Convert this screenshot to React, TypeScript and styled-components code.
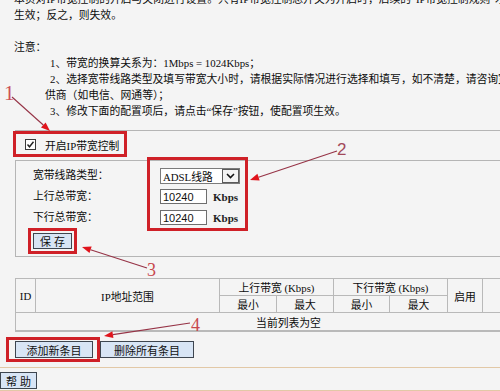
import React from 'react';
import styled, { createGlobalStyle } from 'styled-components';

const GlobalStyle = createGlobalStyle`
  html, body {
    margin: 0;
    padding: 0;
  }
  body {
    width: 500px;
    height: 391px;
    overflow: hidden;
    background: #f4f4f4;
    font-family: "Liberation Serif", "Noto Sans CJK SC", serif;
    font-size: 10.8px;
    color: #0c0c0c;
  }
`;

const Page = styled.div`
  position: relative;
  width: 500px;
  height: 391px;
  overflow: hidden;
`;

// --- texto de ayuda superior ---
const Intro = styled.div`
  margin-top: -9px;
`;

const TextLine = styled.div<{ $indent?: number }>`
  height: 16px;
  line-height: 16px;
  padding-left: ${(p) => p.$indent ?? 14}px;
  white-space: nowrap;
`;

// --- bloque de configuración ---
const Section = styled.section`
  margin: 11px 0 0 15px;
  border-top: 1px solid #b5b5b5;
`;

const CheckRow = styled.div`
  height: 29px;
  display: flex;
  align-items: flex-start;
`;

const RedFrame = styled.div<{ $pad?: string }>`
  border: 3px solid #cf2027;
  padding: ${(p) => p.$pad ?? '0'};
  display: flex;
  align-items: center;
`;

const CheckFrame = styled(RedFrame)`
  margin-left: -2px;
  width: 114px;
  height: 26px;
  box-sizing: border-box;
  padding: 1px 0 0 9px;
  gap: 9px;
`;

const CheckBox = styled.span`
  width: 11px;
  height: 11px;
  box-sizing: border-box;
  border: 1px solid #3b3b3b;
  background: #fff;
  display: flex;
  align-items: center;
  justify-content: center;
`;

const FormBox = styled.div`
  border: 1px solid #b5b5b5;
  border-right: none;
  padding: 4px 0 7px 17px;
`;

const FieldsRow = styled.div`
  display: flex;
  align-items: flex-start;
`;

const LabelCol = styled.div`
  width: 114px;
  display: flex;
  flex-direction: column;
`;

const FieldLabel = styled.div`
  height: 21px;
  line-height: 21px;
  white-space: nowrap;
`;

const ControlFrame = styled.div`
  margin-top: -8px;
  width: 101px;
  box-sizing: border-box;
  border: 3px solid #cf2027;
  padding: 5px 0 0 10px;
  display: flex;
  flex-direction: column;
`;

const ControlRow = styled.div`
  height: 21px;
  display: flex;
  align-items: center;
`;

const FakeSelect = styled.div`
  width: 80px;
  height: 16px;
  box-sizing: border-box;
  border: 1px solid #7b7b7b;
  background: #fff;
  display: flex;
  align-items: center;
`;

const SelectText = styled.span`
  flex: 1;
  padding-left: 2px;
  white-space: nowrap;
`;

const DropButton = styled.span`
  width: 17px;
  height: 14px;
  box-sizing: border-box;
  border: 1px solid #5a5a5a;
  background: #f3f3f3;
  display: flex;
  align-items: center;
  justify-content: center;
`;

const TextInput = styled.input`
  width: 47px;
  height: 15px;
  box-sizing: border-box;
  border: 1px solid #6e6e6e;
  background: #fff;
  padding: 0 2px;
  font-family: "Liberation Sans", Arial, sans-serif;
  font-size: 11px;
  color: #111;
`;

const Unit = styled.span`
  margin-left: 6px;
  font-family: "Liberation Serif", serif;
  font-weight: bold;
  font-size: 11px;
  color: #222;
`;

const SaveRow = styled.div`
  margin-top: 2px;
  display: flex;
`;

const BlueButton = styled.button<{ $w: number }>`
  width: ${(p) => p.$w}px;
  height: 17px;
  box-sizing: border-box;
  padding: 0;
  border: 1px solid #3e4650;
  background: #d8e5f5;
  font-family: "Noto Sans CJK SC", sans-serif;
  font-size: 11px;
  line-height: 14px;
  color: #111;
  white-space: nowrap;
`;

const SaveButton = styled(BlueButton)`
  height: 16px;
  letter-spacing: 3px;
  padding-left: 3px;
  outline: 3px solid #cf2027;
  outline-offset: 2px;
`;

const HelpButton = styled(BlueButton)`
  letter-spacing: 3px;
  padding-left: 3px;
`;

// --- tabla de reglas ---
const RuleTable = styled.table`
  margin: 21px 0 0 15px;
  width: 546px;
  border-collapse: collapse;
  table-layout: fixed;
`;

const Cell = styled.td<{ $h?: number }>`
  height: ${(p) => p.$h ?? 16}px;
  padding: 0;
  border: 1px solid #b9b9b9;
  text-align: center;
  vertical-align: middle;
  white-space: nowrap;
  font-weight: normal;
`;

const EmptyCell = styled(Cell)`
  border-bottom: 2px solid #b9b9b9;
`;

const ActionRow = styled.div`
  margin: 5px 0 0 6px;
  display: flex;
  align-items: center;
`;

const HelpBar = styled.div`
  margin-top: 5px;
  border-top: 1px solid #e2c8a6;
  border-bottom: 1px solid #e2c8a6;
  padding: 4px 0 1px;
  display: flex;
`;

// --- anotaciones (flechas y números rojos) ---
const Overlay = styled.svg`
  position: absolute;
  left: 0;
  top: 0;
  pointer-events: none;
`;

const Arrow: React.FC<{ x1: number; y1: number; x2: number; y2: number }> = ({ x1, y1, x2, y2 }) => {
  const len = Math.hypot(x2 - x1, y2 - y1);
  const ux = (x2 - x1) / len;
  const uy = (y2 - y1) / len;
  const bx = x2 - ux * 9;
  const by = y2 - uy * 9;
  const head = `${x2},${y2} ${bx - uy * 3.5},${by + ux * 3.5} ${bx + uy * 3.5},${by - ux * 3.5}`;
  return (
    <g>
      <line x1={x1} y1={y1} x2={bx} y2={by} stroke="#963346" strokeWidth={1.1} />
      <polygon points={head} fill="#e0141c" />
    </g>
  );
};

const App: React.FC = () => {
  return (
    <Page>
      <GlobalStyle />
      <Intro>
        <TextLine>本页对IP带宽控制的开启与关闭进行设置。只有IP带宽控制总开关为开启时，后续的“IP带宽控制规则”才能</TextLine>
        <TextLine>生效；反之，则失效。</TextLine>
        <TextLine />
        <TextLine>注意：</TextLine>
        <TextLine $indent={50}>1、带宽的换算关系为：1Mbps = 1024Kbps；</TextLine>
        <TextLine $indent={50}>2、选择宽带线路类型及填写带宽大小时，请根据实际情况进行选择和填写，如不清楚，请咨询宽带服务提</TextLine>
        <TextLine $indent={45}>供商（如电信、网通等）；</TextLine>
        <TextLine $indent={50}>3、修改下面的配置项后，请点击“保存”按钮，使配置项生效。</TextLine>
      </Intro>

      <Section>
        <CheckRow>
          <CheckFrame>
            <CheckBox>
              <svg width="9" height="9" viewBox="0 0 9 9">
                <path d="M1.5 4.5 L3.5 6.8 L7.5 1.8" fill="none" stroke="#222" strokeWidth="1.4" />
              </svg>
            </CheckBox>
            <span>开启IP带宽控制</span>
          </CheckFrame>
        </CheckRow>

        <FormBox>
          <FieldsRow>
            <LabelCol>
              <FieldLabel>宽带线路类型：</FieldLabel>
              <FieldLabel>上行总带宽：</FieldLabel>
              <FieldLabel>下行总带宽：</FieldLabel>
            </LabelCol>
            <ControlFrame>
              <ControlRow>
                <FakeSelect>
                  <SelectText>ADSL线路</SelectText>
                  <DropButton>
                    <svg width="9" height="6" viewBox="0 0 9 6">
                      <path d="M1 1 L4.5 4.6 L8 1" fill="none" stroke="#111" strokeWidth="1.5" />
                    </svg>
                  </DropButton>
                </FakeSelect>
              </ControlRow>
              <ControlRow>
                <TextInput readOnly value="10240" />
                <Unit>Kbps</Unit>
              </ControlRow>
              <ControlRow>
                <TextInput readOnly value="10240" />
                <Unit>Kbps</Unit>
              </ControlRow>
            </ControlFrame>
          </FieldsRow>
          <SaveRow>
            <SaveButton $w={39}>保存</SaveButton>
          </SaveRow>
        </FormBox>
      </Section>

      <RuleTable>
        <colgroup>
          <col style={{ width: 20 }} />
          <col style={{ width: 184 }} />
          <col style={{ width: 57 }} />
          <col style={{ width: 57 }} />
          <col style={{ width: 56 }} />
          <col style={{ width: 58 }} />
          <col style={{ width: 35 }} />
          <col style={{ width: 79 }} />
        </colgroup>
        <thead>
          <tr>
            <Cell as="th" rowSpan={2}>ID</Cell>
            <Cell as="th" rowSpan={2}>IP地址范围</Cell>
            <Cell as="th" colSpan={2}>上行带宽 (Kbps)</Cell>
            <Cell as="th" colSpan={2}>下行带宽 (Kbps)</Cell>
            <Cell as="th" rowSpan={2}>启用</Cell>
            <Cell as="th" rowSpan={2} />
          </tr>
          <tr>
            <Cell as="th">最小</Cell>
            <Cell as="th">最大</Cell>
            <Cell as="th">最小</Cell>
            <Cell as="th">最大</Cell>
          </tr>
        </thead>
        <tbody>
          <tr>
            <EmptyCell colSpan={8} $h={17}>当前列表为空</EmptyCell>
          </tr>
        </tbody>
      </RuleTable>

      <ActionRow>
        <RedFrame $pad="1px 4px 1px 6px">
          <BlueButton $w={78}>添加新条目</BlueButton>
        </RedFrame>
        <BlueButton $w={94}>删除所有条目</BlueButton>
      </ActionRow>

      <HelpBar>
        <HelpButton $w={37}>帮助</HelpButton>
      </HelpBar>

      <Overlay width={500} height={391} viewBox="0 0 500 391">
        <Arrow x1={12} y1={97} x2={50} y2={131} />
        <Arrow x1={337} y1={151} x2={250} y2={180} />
        <Arrow x1={147} y1={268} x2={82} y2={247} />
        <Arrow x1={190} y1={323} x2={104} y2={336} />
        <text x={4} y={100} fontFamily="Liberation Serif, serif" fontSize={21} fill="#cc5055">1</text>
        <text x={337} y={155} fontFamily="Liberation Sans, sans-serif" fontSize={17} fill="#a2495a">2</text>
        <text x={147} y={276} fontFamily="Liberation Serif, serif" fontSize={18} fill="#c8484c">3</text>
        <text x={191} y={331} fontFamily="Liberation Serif, serif" fontSize={18} fill="#c8484c">4</text>
      </Overlay>
    </Page>
  );
};

export default App;
